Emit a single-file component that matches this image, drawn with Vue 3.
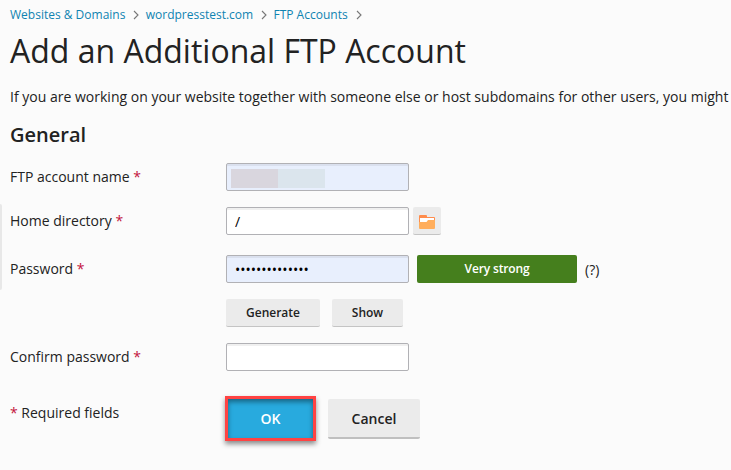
<template>
  <div class="page">
    <!-- edge of the collapsed sidebar -->
    <div class="sidebar-handle"></div>

    <nav class="pathbar">
      <span v-for="item in path" :key="item" class="path-item">
        <a href="#" @click.prevent>{{ item }}</a>
        <svg class="chevron" width="6" height="10" viewBox="0 0 6 10">
          <path d="M1 1l4 4-4 4" fill="none" stroke="#777" stroke-width="1.1" />
        </svg>
      </span>
    </nav>

    <h1>Add an Additional FTP Account</h1>
    <p class="description">If you are working on your website together with someone else or host subdomains for other users, you might</p>

    <h2>General</h2>

    <form class="form" @submit.prevent>
      <!-- Account name -->
      <div class="row">
        <label>FTP account name <span class="required">*</span></label>
        <div class="field filled masked">
          <span class="mask mask-left"></span>
          <span class="mask mask-right"></span>
        </div>
      </div>

      <!-- Home directory -->
      <div class="row row-home">
        <label>Home directory <span class="required">*</span></label>
        <input v-model="home" class="field" type="text">
        <button class="btn btn-folder" type="button">
          <svg width="16" height="14" viewBox="0 0 16 14">
            <path d="M0 1q0-1 1-1h6q1 0 1 1v1h7q1 0 1 1v4H0z" fill="#ff8c4c" />
            <path d="M1 3h14v4H1z" fill="#fff" />
            <path d="M0 7h7.5l1.5-2h7v8q0 1-1 1H1q-1 0-1-1z" fill="#ffae5c" />
          </svg>
        </button>
      </div>

      <!-- Password -->
      <div class="row">
        <label>Password <span class="required">*</span></label>
        <input v-model="password" class="field filled" type="password">
        <div class="strength">Very strong</div>
        <span class="hint">(?)</span>
      </div>
      <div class="row row-tools">
        <button class="btn btn-generate" type="button">Generate</button>
        <button class="btn btn-show" type="button">Show</button>
      </div>

      <!-- Confirm -->
      <div class="row">
        <label>Confirm password <span class="required">*</span></label>
        <input v-model="confirm" class="field" type="password">
      </div>

      <div class="row row-actions">
        <div class="note"><span class="required">*</span> Required fields</div>
        <button class="btn-ok" type="submit">OK</button>
        <button class="btn btn-cancel" type="button">Cancel</button>
      </div>
    </form>
  </div>
</template>

<script setup>
import { ref } from 'vue'

const path = ['Websites & Domains', 'wordpresstest.com', 'FTP Accounts']
const home = ref('/')
const password = ref('examplepasswd1')
const confirm = ref('')
</script>

<style>
body {
  margin: 0;
  background: #fbfbfb;
}
</style>

<style scoped>
.page {
  position: relative;
  box-sizing: border-box;
  height: 470px;
  padding: 5px 0 0 10px;
  overflow: hidden;
  background: #fbfbfb;
  color: #222;
  font: 14px/20px "Open Sans", sans-serif;
}

.sidebar-handle {
  position: absolute;
  left: 0;
  top: 204px;
  width: 2px;
  height: 86px;
  background: #e8e8e8;
  border-radius: 0 2px 2px 0;
}

/* ========================
   HEADER
======================== */
.pathbar {
  display: flex;
  height: 20px;
  font-size: 12px;
}

.path-item {
  display: flex;
  align-items: center;
}

.path-item a {
  color: #0f83b1;
  text-decoration: none;
}

.chevron {
  margin: 0 6.3px 0 8px;
}

h1 {
  margin: 4px 0 0;
  font-size: 32px;
  font-weight: 400;
  line-height: 44px;
}

.description {
  margin: 14px 0 0;
  white-space: nowrap;
  letter-spacing: 0.006px;
}

h2 {
  margin: 14px 0 0;
  font-size: 20px;
  font-weight: 600;
  line-height: 28px;
}

/* ========================
   FORM
======================== */
.form {
  margin-top: 14px;
}

.row {
  display: flex;
  height: 28px;
  margin-bottom: 16px;
}

.row-home {
  margin-bottom: 20px;
}

label,
.note {
  width: 216px;
  line-height: 28px;
}

.required {
  color: #c3133c;
}

.field {
  box-sizing: border-box;
  width: 183px;
  height: 28px;
  padding: 1px 9px 1px 8px;
  border: 1px solid #b1b1b5;
  border-radius: 2px;
  outline: none;
  background: #fff;
  box-shadow: inset 0 2px 0 rgba(0, 0, 0, 0.06);
  color: #000;
  font: 14px "Open Sans", sans-serif;
}

.filled {
  background: #e8effd;
}

.masked {
  display: flex;
  padding: 5px 4px;
}

.mask {
  width: 47px;
  height: 19px;
}

.mask-left {
  background: #d9d6de;
}

.mask-right {
  background: #dbe5ed;
}

.strength {
  width: 160px;
  height: 28px;
  margin-left: 8px;
  border-radius: 2px;
  background: #457f1d;
  color: #fff;
  font-size: 12px;
  font-weight: 600;
  letter-spacing: -0.15px;
  line-height: 28px;
  text-align: center;
}

.hint {
  margin-left: 8px;
  line-height: 30px;
}

/* ========================
   BUTTONS
======================== */
.btn {
  box-sizing: border-box;
  height: 28px;
  padding: 0;
  border: none;
  border-bottom: 1px solid #c4c4c4;
  border-radius: 2px;
  background: #ebebeb;
  color: #222;
  font: 600 12px "Open Sans", sans-serif;
}

.btn-folder {
  display: flex;
  align-items: center;
  justify-content: center;
  width: 28px;
  margin-left: 4px;
  padding-top: 2px;
}

.row-tools {
  padding-left: 216px;
}

.btn-generate {
  width: 94px;
}

.btn-show {
  width: 71px;
  margin-left: 12px;
}

.row-actions {
  height: 45px;
  margin-top: 25px;
}

.note {
  width: 215px;
  line-height: 34px;
}

.btn-ok {
  box-sizing: border-box;
  width: 91px;
  height: 45px;
  padding: 0;
  border: 3px solid #ff4343;
  background: #28aade;
  box-shadow: 0 3px 5px rgba(0, 0, 0, 0.45), inset 0 3px 5px rgba(0, 0, 0, 0.4);
  color: #fff;
  font: 600 14px "Open Sans", sans-serif;
}

.btn-cancel {
  width: 92px;
  height: 40px;
  margin: 3px 0 0 12px;
  border-bottom: 2px solid #bfbfbf;
  font-size: 14px;
}
</style>
